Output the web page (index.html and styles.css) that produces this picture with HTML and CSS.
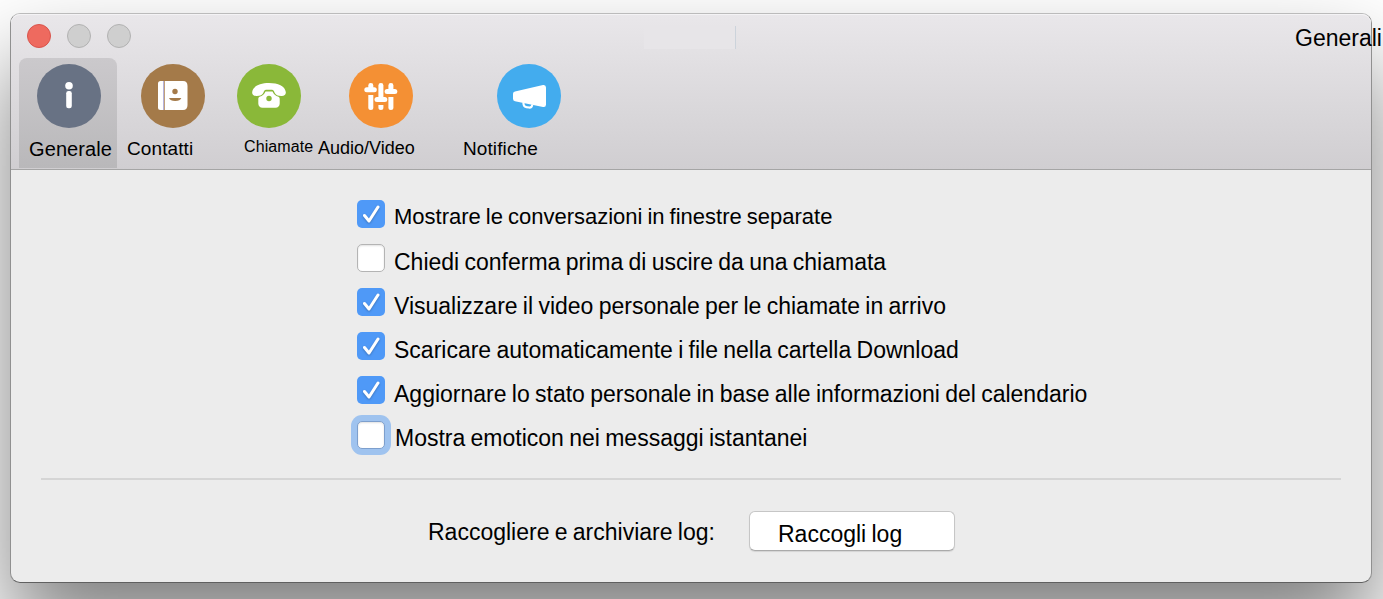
FILE: index.html
```html
<!DOCTYPE html>
<html lang="it">
<head>
  <meta charset="UTF-8">
  <meta name="viewport" content="width=device-width, initial-scale=1">
  <title>Generali</title>
  <link rel="stylesheet" href="styles.css">
</head>
<body>

<div class="window">
  <header class="toolbar">
    <div class="titlebar">
      <div class="lights">
        <span class="light close"></span>
        <span class="light"></span>
        <span class="light"></span>
      </div>
      <div class="title-slot"></div>
      <h1 class="title">Generali</h1>
    </div>

    <nav class="tabs">
      <a class="tab tab-general active">
        <svg class="icon" viewBox="0 0 64 64">
          <circle cx="32" cy="32" r="32" fill="#687284"/>
          <circle cx="32" cy="21.7" r="3.8" fill="#fff"/>
          <rect x="29.2" y="27" width="5.6" height="17.3" rx="2.3" fill="#fff"/>
        </svg>
        <span>Generale</span>
      </a>
      <a class="tab tab-contacts">
        <svg class="icon" viewBox="0 0 64 64">
          <circle cx="32" cy="32" r="32" fill="#a47a49"/>
          <path d="M19.5 17H42q4.500 0 4.500 5v19q0 5-4.500 5H19.500q-2.500 0-2.500-2.500v-24q0-2.500 2.500-2.500z" fill="#fff"/>
          <path d="M22.500 17v29" stroke="#b5b2dc" stroke-width="1"/>
          <path d="M23.500 17v29" stroke="#c0a07c" stroke-width="1"/>
          <circle cx="34" cy="27.500" r="2.700" fill="#a47a49"/>
          <path d="M28 34h12.300q-1 3-6.100 3T28 34z" fill="#a47a49"/>
        </svg>
        <span>Contatti</span>
      </a>
      <a class="tab tab-calls">
        <svg class="icon" viewBox="0 0 64 64">
          <circle cx="32" cy="32" r="32" fill="#8ab839"/>
          <path d="M15.200 28C16 22 23 19 32 19s16 3 16.800 9c.3 2.500-1.500 4.200-4.500 4-3.500 0-5.800-1-6.800-3.500-.6-1.900-1.300-2.800-2.500-2.800h-6c-1.200 0-1.900.9-2.500 2.800-1 2.500-3.300 3.500-6.800 3.500-3 .2-4.800-1.500-4.500-4z" fill="#fff"/>
          <path d="M28.500 27.500h7c1 2.300 3 4.500 6 5.200.9.500 1.200 1.200 1.200 2.300v4.500c0 2.700-1.700 4.200-4.200 4.200h-13c-2.500 0-4.200-1.500-4.200-4.200V35c0-1.100.3-1.800 1.200-2.300 3-.7 5-2.900 6-5.200z" fill="#fff"/>
          <circle cx="32" cy="34.500" r="2.700" fill="#8ab839"/>
        </svg>
        <span>Chiamate</span>
      </a>
      <a class="tab tab-av">
        <svg class="icon" viewBox="0 0 64 64">
          <circle cx="32" cy="32" r="32" fill="#f49034"/>
          <g fill="#fff">
            <rect x="19.300" y="19" width="5" height="8" rx="2.400"/>
            <rect x="15.300" y="23.200" width="12.500" height="5" rx="2.500"/>
            <path d="M19.300 31h5v12.500q0 2.500-2.500 2.500t-2.500-2.500z"/>
            <rect x="29.400" y="19" width="5" height="16" rx="2.400"/>
            <rect x="25.500" y="33" width="12.800" height="5" rx="2.500"/>
            <path d="M29.400 41h5v2.500q0 2.500-2.500 2.500t-2.500-2.500z"/>
            <rect x="39.400" y="19" width="5" height="8" rx="2.400"/>
            <rect x="35.600" y="25" width="12.700" height="5" rx="2.500"/>
            <path d="M39.400 33h5v10.500q0 2.500-2.500 2.500t-2.500-2.500z"/>
          </g>
        </svg>
        <span>Audio/Video</span>
      </a>
      <a class="tab tab-notify">
        <svg class="icon" viewBox="0 0 64 64">
          <circle cx="32" cy="32" r="32" fill="#43acee"/>
          <path d="M18 27.500 46 21q3-.5 3 2.500v17q0 3-3 2.500l-28-5.700q-2-.5-2-2.500v-5q0-1.800 2-2.300z" fill="#fff"/>
          <path d="M26.500 38.500q-.5 4 3 4.700l2.500.3q3.200.3 3.200-3" fill="none" stroke="#fff" stroke-width="2.200"/>
        </svg>
        <span>Notifiche</span>
      </a>
    </nav>
  </header>

  <main class="content">
    <div class="options">
      <label class="option option-first"><span class="check on"><svg viewBox="0 0 28 28"><path d="M7.500 15.500l4.500 5.500 9-14"/></svg></span><span class="text">Mostrare le conversazioni in finestre separate</span></label>
      <label class="option"><span class="check"></span><span class="text">Chiedi conferma prima di uscire da una chiamata</span></label>
      <label class="option"><span class="check on"><svg viewBox="0 0 28 28"><path d="M7.500 15.500l4.500 5.500 9-14"/></svg></span><span class="text">Visualizzare il video personale per le chiamate in arrivo</span></label>
      <label class="option"><span class="check on"><svg viewBox="0 0 28 28"><path d="M7.500 15.500l4.500 5.500 9-14"/></svg></span><span class="text">Scaricare automaticamente i file nella cartella Download</span></label>
      <label class="option"><span class="check on"><svg viewBox="0 0 28 28"><path d="M7.500 15.500l4.500 5.500 9-14"/></svg></span><span class="text">Aggiornare lo stato personale in base alle informazioni del calendario</span></label>
      <label class="option option-last"><span class="check focus"></span><span class="text">Mostra emoticon nei messaggi istantanei</span></label>
    </div>

    <hr>

    <div class="logs">
      <span class="logs-label">Raccogliere e archiviare log:</span>
      <button class="btn">Raccogli log</button>
    </div>
  </main>
</div>

</body>
</html>
```
FILE: styles.css
```css
* { box-sizing: border-box; }
html { overflow: hidden; }
body {
  margin: 0;
  padding: 13px 11px 16px 10px;
  height: 599px;
  background: #fff;
  color: #000;
  font-family: "Liberation Sans", Arial, sans-serif;
  font-size: 23px;
  word-spacing: -1.1px;
  white-space: nowrap;
  overflow: hidden;
}
.window {
  height: 570px;
  border: 1px solid #909090;
  border-top-color: #bbb;
  border-bottom-color: #606060;
  border-radius: 10px;
  background: #ececec;
  box-shadow: 0 50px 90px rgba(0,0,0,0.5);
}

/* toolbar */
.toolbar {
  height: 156px;
  border-bottom: 1px solid #a5a5a5;
  border-radius: 9px 9px 0 0;
  background: linear-gradient(#e9e7ea, #d0ced1);
  box-shadow: inset 0 1px #f4f3f5;
}
.titlebar {
  display: grid;
  grid-template-columns: 1fr 92px 1fr;
  height: 44px;
}
.lights {
  display: flex;
  gap: 16px;
  padding: 10px 0 0 16px;
}
.light {
  width: 24px;
  height: 24px;
  border: 1px solid #b2b2b2;
  border-radius: 50%;
  background: #cfcfcf;
}
.light.close {
  border-color: #d9544c;
  background: #ee6a5f;
}
.title-slot {
  height: 23px;
  margin: 12px 1px 0 -1px;
  border-right: 1px solid #ccd3db;
  background: #e7e5e8;
}
.title {
  justify-self: end;
  width: 76px;
  margin: 11px 0 0;
  font-size: 23px;
  font-weight: normal;
}
.tabs {
  display: flex;
  height: 110px;
  padding-left: 8px;
}
.tab {
  display: flex;
  flex-direction: column;
  align-items: center;
  padding-top: 6px;
  font-size: 19px;
  letter-spacing: 0.1px;
}
.tab span {
  align-self: flex-start;
  margin: 10px 0 0 10px;
}
.tab.active {
  border-radius: 8px 8px 0 0;
  background: linear-gradient(#cbc9cc, #b9b8ba);
}
.icon {
  width: 64px;
  height: 64px;
  flex: none;
}
.tab-general { width: 98px; font-size: 20px; }
.tab-general .icon { margin-left: 2px; }
.tab-contacts { width: 112px; }
.tab-calls { width: 80px; font-size: 16px; }
.tab-calls span { margin-left: 15px; }
.tab-av { width: 144px; font-size: 18px; letter-spacing: 0; }
.tab-av span { margin-left: 9px; }
.tab-notify { width: 152px; }

/* preferences */
.content {
  padding: 22px 30px 0;
}
.options {
  display: flex;
  flex-direction: column;
  padding-left: 316px;
}
.option {
  display: flex;
  align-items: center;
  height: 44px;
}
.option .text {
  margin: 8px 0 0 9px;
}
.option-first .text {
  margin-top: 5px;
  font-size: 22px;
}
.option-last {
  padding-top: 1px;
}
.option-last .text {
  margin-left: 10px;
}
.check {
  width: 28px;
  height: 28px;
  border: 1px solid #b4b4b4;
  border-radius: 5px;
  background: #fff;
  box-shadow: inset 0 1px 2px rgba(0,0,0,0.12);
}
.check.on {
  border: none;
  background: #4f99f7;
  box-shadow: none;
}
.check.focus {
  border-color: #7d9fcd;
  box-shadow: 0 0 0 6px #9fc3ef, inset 0 1px 2px rgba(0,0,0,0.12);
}
.check svg {
  display: block;
  fill: none;
  stroke: #fff;
  stroke-width: 3;
  stroke-linecap: round;
  stroke-linejoin: round;
  filter: drop-shadow(0 1px 1px rgba(0,0,0,0.25));
}
hr {
  height: 2px;
  margin: 22px 0 31px;
  border: none;
  background: #d5d5d5;
}
.logs {
  display: flex;
  align-items: center;
  padding-left: 387px;
}
.logs-label {
  width: 321px;
  padding-top: 2px;
}
.btn {
  width: 206px;
  height: 40px;
  padding: 6px 0 0 28px;
  border: 1px solid #c6c6c6;
  border-bottom-color: #aaa;
  border-radius: 6px;
  background: #fff;
  box-shadow: 0 1px 1px rgba(0,0,0,0.1);
  color: #000;
  font: inherit;
  letter-spacing: inherit;
  word-spacing: inherit;
  text-align: left;
}
```
